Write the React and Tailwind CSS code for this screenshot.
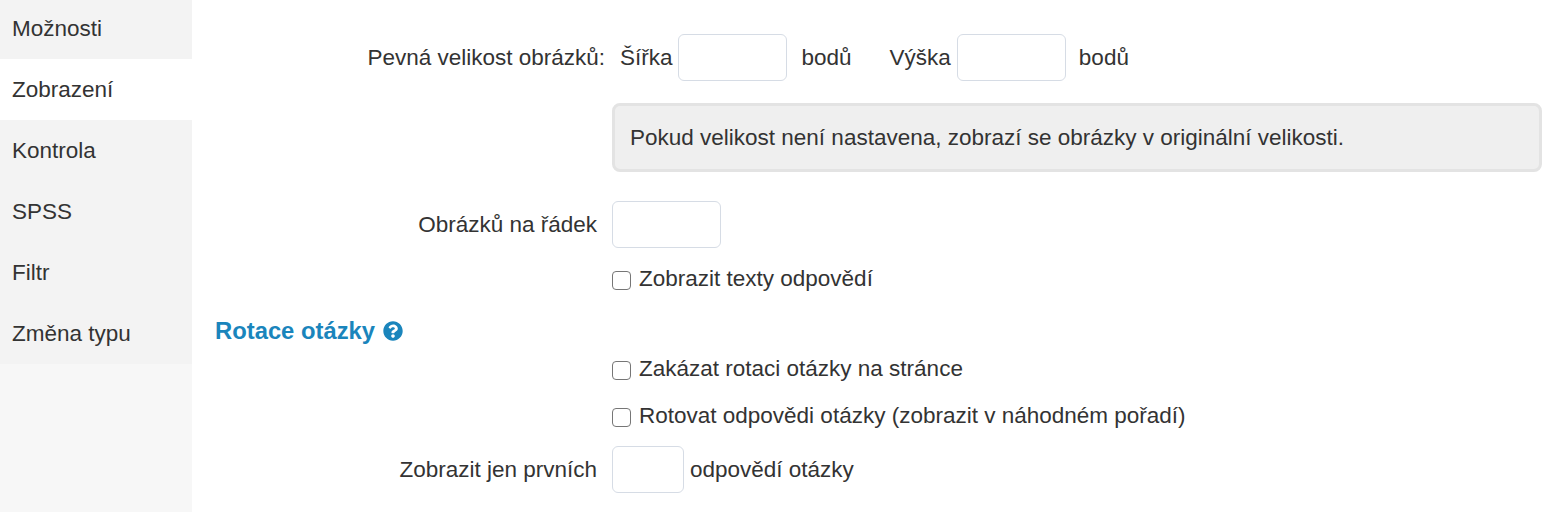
const F = "font-['Liberation_Sans',Arial,sans-serif]";

function Check({ children }) {
  return (
    <label className="flex items-center ml-[397px] h-[24px]">
      <input type="checkbox" className="appearance-none w-[19px] h-[19px] rounded-[4px] border border-[#767676] bg-white" />
      <span className="ml-[8px] -mt-[2px]">{children}</span>
    </label>
  );
}

function Input({ w }) {
  return <input type="text" className={`${w} h-[47px] rounded-[6px] border border-[#d6dce5] bg-white`} />;
}

export default function App() {
  const items = ["Možnosti", "Zobrazení", "Kontrola", "SPSS", "Filtr", "Změna typu"];
  return (
    <div className={`${F} flex w-[1561px] h-[512px] overflow-hidden bg-white text-[#333333] text-[22.5px] leading-[30px]`}>
      <aside className="w-[192px] shrink-0 bg-[#f7f7f7]">
        {items.map((t) => (
          <div key={t} className={`h-[61px] flex items-center pl-[12px] ${t === "Zobrazení" ? "bg-white" : "bg-[#f3f3f3]"} first:mt-[-2px]`}>
            {t}
          </div>
        ))}
      </aside>
      <main className="flex-1 pl-[23px] pr-[19px] pt-[34px]">
        <div className="flex items-center">
          <div className="w-[390px] text-right">Pevná velikost obrázků:</div>
          <span className="ml-[15px]">Šířka</span>
          <div className="ml-[5px]"><Input w="w-[109px]" /></div>
          <span className="ml-[15px]">bodů</span>
          <span className="ml-[38px]">Výška</span>
          <div className="ml-[6px]"><Input w="w-[109px]" /></div>
          <span className="ml-[13px]">bodů</span>
        </div>
        <div className="ml-[397px] mt-[22px] h-[69px] flex items-center pl-[15px] rounded-[8px] border-[3px] border-[#e3e3e3] bg-[#efefef]">
          Pokud velikost není nastavena, zobrazí se obrázky v originální velikosti.
        </div>
        <div className="flex items-center mt-[29px]">
          <div className="w-[382px] text-right">Obrázků na řádek</div>
          <div className="ml-[15px]"><Input w="w-[109px]" /></div>
        </div>
        <div className="mt-[20px]"><Check>Zobrazit texty odpovědí</Check></div>
        <div className="flex items-center mt-[24px] h-[30px] font-bold text-[23.8px] text-[#1a85bc]">
          <span>Rotace otázky</span>
          <svg className="ml-[8px] w-[20px] h-[20px]" viewBox="0 0 512 512" fill="currentColor">
            <path d="M504 256c0 136.997-111.043 248-248 248S8 392.997 8 256C8 119.083 119.043 8 256 8s248 111.083 248 248zM262.655 90c-54.497 0-89.255 22.957-116.549 63.758-3.536 5.286-2.353 12.415 2.715 16.258l34.699 26.31c5.205 3.947 12.621 3.008 16.665-2.122 17.864-22.658 30.113-35.797 57.303-35.797 20.429 0 45.698 13.148 45.698 32.958 0 14.976-12.363 22.667-32.534 33.976C247.128 238.528 216 254.941 216 296v4c0 6.627 5.373 12 12 12h56c6.627 0 12-5.373 12-12v-1.333c0-28.462 83.186-29.647 83.186-106.667 0-58.002-60.165-102-116.531-102zM256 338c-25.365 0-46 20.635-46 46 0 25.364 20.635 46 46 46s46-20.636 46-46c0-25.365-20.635-46-46-46z" />
          </svg>
        </div>
        <div className="mt-[12px]"><Check>Zakázat rotaci otázky na stránce</Check></div>
        <div className="mt-[23px]"><Check>Rotovat odpovědi otázky (zobrazit v náhodném pořadí)</Check></div>
        <div className="flex items-center mt-[17px]">
          <div className="w-[382px] text-right">Zobrazit jen prvních</div>
          <div className="ml-[15px]"><Input w="w-[72px]" /></div>
          <span className="ml-[6px]">odpovědí otázky</span>
        </div>
      </main>
    </div>
  );
}
